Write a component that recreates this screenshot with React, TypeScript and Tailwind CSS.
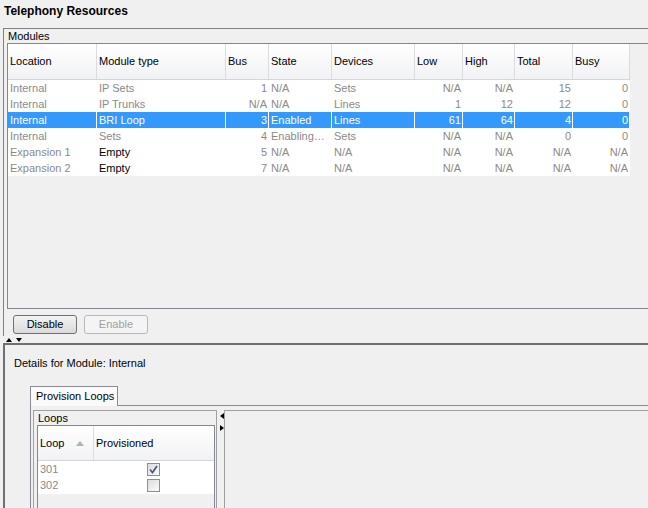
import React from 'react';

type Col = { label: string; w: string; right: boolean };

const columns: Col[] = [
  { label: 'Location', w: 'w-[89px]', right: false },
  { label: 'Module type', w: 'w-[129px]', right: false },
  { label: 'Bus', w: 'w-[43px]', right: true },
  { label: 'State', w: 'w-[63px]', right: false },
  { label: 'Devices', w: 'w-[83px]', right: false },
  { label: 'Low', w: 'w-[48px]', right: true },
  { label: 'High', w: 'w-[52px]', right: true },
  { label: 'Total', w: 'w-[58px]', right: true },
  { label: 'Busy', w: 'w-[57px]', right: true },
];

const rows = [
  { cells: ['Internal', 'IP Sets', '1', 'N/A', 'Sets', 'N/A', 'N/A', '15', '0'], empty: false, selected: false },
  { cells: ['Internal', 'IP Trunks', 'N/A', 'N/A', 'Lines', '1', '12', '12', '0'], empty: false, selected: false },
  { cells: ['Internal', 'BRI Loop', '3', 'Enabled', 'Lines', '61', '64', '4', '0'], empty: false, selected: true },
  { cells: ['Internal', 'Sets', '4', 'Enabling…', 'Sets', 'N/A', 'N/A', '0', '0'], empty: false, selected: false },
  { cells: ['Expansion 1', 'Empty', '5', 'N/A', 'N/A', 'N/A', 'N/A', 'N/A', 'N/A'], empty: true, selected: false },
  { cells: ['Expansion 2', 'Empty', '7', 'N/A', 'N/A', 'N/A', 'N/A', 'N/A', 'N/A'], empty: true, selected: false },
];

const loops = [
  { loop: '301', on: true },
  { loop: '302', on: false },
];

function Tri({ dir }: { dir: 'up' | 'down' | 'left' | 'right' }) {
  // tiny splitter arrows
  const pts = {
    up: '0,4 3,0 6,4',
    down: '0,0 6,0 3,4',
    left: '4,0 4,6 0,3',
    right: '0,0 4,3 0,6',
  }[dir];
  const vertical = dir === 'up' || dir === 'down';
  return (
    <svg width={vertical ? 6 : 4} height={vertical ? 4 : 6} className="block">
      <polygon points={pts} fill="#000" />
    </svg>
  );
}

function CheckBox({ on }: { on: boolean }) {
  return (
    <div className="w-[13px] h-[13px] border border-[#8f8f8f] bg-gradient-to-br from-[#dcdcdc] to-[#fbfbfb] flex items-center justify-center">
      {on && (
        <svg width="9" height="9" viewBox="0 0 9 9">
          <path d="M1 4.5 L3.5 7.5 L8 1" stroke="#4a5a8a" strokeWidth="1.8" fill="none" />
        </svg>
      )}
    </div>
  );
}

export default function App() {
  return (
    <div className="w-[648px] h-[508px] overflow-hidden bg-[#f0f0f0] text-[11px] text-black font-['Liberation_Sans',Arial,sans-serif] flex flex-col">
      {/* Title */}
      <div className="h-[28px] shrink-0 pl-[4px] pt-[4px] text-[12px] font-bold leading-[14px]">
        Telephony Resources
      </div>

      {/* Modules panel */}
      <div className="ml-[3px] h-[308px] shrink-0 border-t border-l border-[#808080] flex flex-col">
        <div className="h-[14px] pl-[4px] leading-[14px]">Modules</div>

        {/* Scroll pane with table */}
        <div className="ml-[3px] h-[266px] border-t border-l border-b border-[#828790] bg-[#f0f0f0]">
          <div className="flex h-[36px] border-b border-[#d5d5d5] w-[622px] bg-gradient-to-b from-white to-[#f1f2f4]">
            {columns.map((c) => (
              <div
                key={c.label}
                className={`${c.w} shrink-0 border-r border-[#dcdcdc] pl-[2px] flex items-center`}
              >
                {c.label}
              </div>
            ))}
          </div>
          <div className="w-[622px] bg-white">
            {rows.map((r, ri) => (
              <div key={ri} className={`flex h-[16px] ${r.selected ? 'bg-[#3399ff] text-white' : ''}`}>
                {r.cells.map((v, ci) => {
                  const c = columns[ci];
                  const colour = r.selected
                    ? 'text-white'
                    : r.empty && ci === 1
                    ? 'text-black'
                    : 'text-[#8a8a8a]';
                  return (
                    <div
                      key={ci}
                      className={`${c.w} shrink-0 leading-[16px] whitespace-nowrap overflow-hidden border-r ${
                        r.selected ? 'border-white' : 'border-transparent'
                      } ${c.right ? 'text-right pr-[1px]' : 'pl-[2px]'} ${colour}`}
                    >
                      {v}
                    </div>
                  );
                })}
              </div>
            ))}
          </div>
        </div>

        {/* Buttons */}
        <div className="flex gap-[7px] ml-[9px] mt-[6px]">
          <button className="w-[64px] h-[19px] rounded-[3px] border border-[#707070] bg-gradient-to-b from-[#f3f3f3] to-[#dadada] leading-[17px] text-black">
            Disable
          </button>
          <button className="w-[64px] h-[19px] rounded-[3px] border border-[#b4b8bb] bg-[#f4f4f4] leading-[17px] text-[#a0a0a0]">
            Enable
          </button>
        </div>
      </div>

      {/* Splitter */}
      <div className="h-[7px] shrink-0 flex items-start gap-[4px] pl-[6px] pt-[2px]">
        <Tri dir="up" />
        <Tri dir="down" />
      </div>

      {/* Details panel */}
      <div className="ml-[3px] flex-1 border-t-2 border-l-2 border-[#6f6f6f] flex flex-col">
        <div className="pl-[9px] pt-[11px] leading-[14px]">Details for Module: Internal</div>

        {/* Tabs */}
        <div className="flex mt-[16px] ml-[25px]">
          <div className="w-[88px] h-[20px] shrink-0 border-t border-l border-r border-[#898c95] bg-[#fafafa] pl-[5px] leading-[18px]">
            Provision Loops
          </div>
          <div className="flex-1 border-b border-[#898c95]" />
        </div>
        <div className="ml-[25px] flex-1 border-l border-[#898c95] flex pt-[4px]">
          {/* Loops panel */}
          <div className="ml-[2px] w-[184px] shrink-0 border-t border-l border-r border-[#a0a0a0] flex flex-col">
            <div className="h-[14px] pl-[4px] leading-[14px]">Loops</div>
            <div className="ml-[3px] mr-[1px] flex-1 border-t border-l border-r border-[#828790] bg-[#f0f0f0]">
              <div className="flex h-[35px] border-b border-[#d5d5d5] bg-gradient-to-b from-white to-[#f1f2f4]">
                <div className="w-[56px] shrink-0 border-r border-[#dcdcdc] pl-[2px] flex items-center gap-[12px]">
                  <span>Loop</span>
                  <svg width="8" height="5" className="block">
                    <polygon points="0,5 4,0 8,5" fill="#b0b0b0" />
                  </svg>
                </div>
                <div className="flex-1 pl-[2px] flex items-center">Provisioned</div>
              </div>
              <div className="bg-white pb-[1px]">
                {loops.map((l) => (
                  <div key={l.loop} className="flex h-[16px] items-center">
                    <div className="w-[56px] shrink-0 pl-[2px] text-[#8a8a8a] leading-[16px]">{l.loop}</div>
                    <div className="flex-1 flex justify-center pr-[1px]">
                      <CheckBox on={l.on} />
                    </div>
                  </div>
                ))}
              </div>
            </div>
          </div>

          {/* vertical splitter */}
          <div className="w-[7px] shrink-0 flex flex-col items-end pt-[3px] gap-[6px]">
            <Tri dir="left" />
            <Tri dir="right" />
          </div>

          {/* right pane */}
          <div className="flex-1 border-t border-l border-[#a0a0a0]" />
        </div>
      </div>
    </div>
  );
}
